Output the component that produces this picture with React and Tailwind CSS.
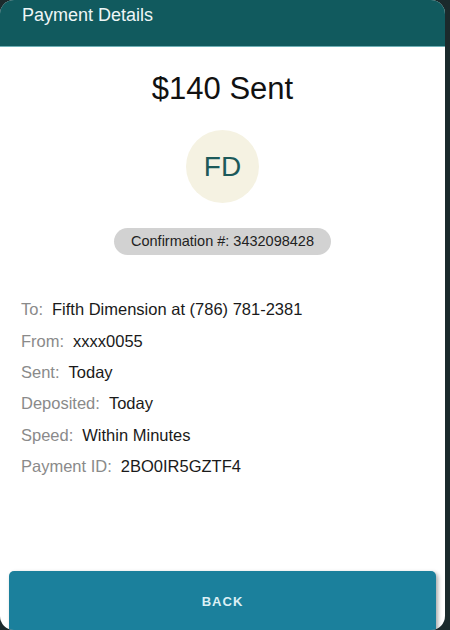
import React from "react";

const details = [
  { label: "To:", value: "Fifth Dimension at (786) 781-2381" },
  { label: "From:", value: "xxxx0055" },
  { label: "Sent:", value: "Today" },
  { label: "Deposited:", value: "Today" },
  { label: "Speed:", value: "Within Minutes" },
  { label: "Payment ID:", value: "2BO0IR5GZTF4" },
];

export default function App() {
  return (
    <div
      className="w-[450px] h-[630px] overflow-hidden bg-[#1b2a2c]"
      style={{ fontFamily: '"Liberation Sans", Arial, sans-serif' }}
    >
      <div className="w-[445px] h-[630px] bg-white rounded-[14px] overflow-hidden flex flex-col">
        <div className="h-[47px] shrink-0 bg-[#115a5e] border-b border-[#6fb0b6] px-[22px] pt-[3px]">
          <h1 className="text-[18px] leading-[24px] text-[#eef6f6]">Payment Details</h1>
        </div>

        <div className="flex flex-col items-center">
          <p className="mt-[24px] text-[31px] leading-[36px] text-[#111]">$140 Sent</p>
          <div className="mt-[23px] w-[73px] h-[73px] rounded-full bg-[#f5f2e2] flex items-center justify-center">
            <span className="text-[28px] leading-none text-[#1c5a5a]">FD</span>
          </div>
          <div className="mt-[25px] h-[27px] w-[217px] rounded-full bg-[#d2d2d2] flex items-center justify-center">
            <span className="text-[14.5px] text-[#222]">Confirmation #: 3432098428</span>
          </div>
        </div>

        <div className="mt-[39px] px-[21px]">
          {details.map((row) => (
            <div key={row.label} className="h-[31.4px] flex items-center gap-[9px] text-[16.5px]">
              <span className="text-[#8a8a8a]">{row.label}</span>
              <span className="text-[#1a1a1a]">{row.value}</span>
            </div>
          ))}
        </div>

        <button className="mt-auto mx-[9px] h-[59px] shrink-0 rounded-t-[5px] bg-[#1b809c] shadow-[2px_2px_4px_rgba(0,0,0,0.35)] flex items-center justify-center pt-[3px]">
          <span className="text-[13px] font-bold tracking-[1px] text-[#dcf0f5]">BACK</span>
        </button>
      </div>
    </div>
  );
}
